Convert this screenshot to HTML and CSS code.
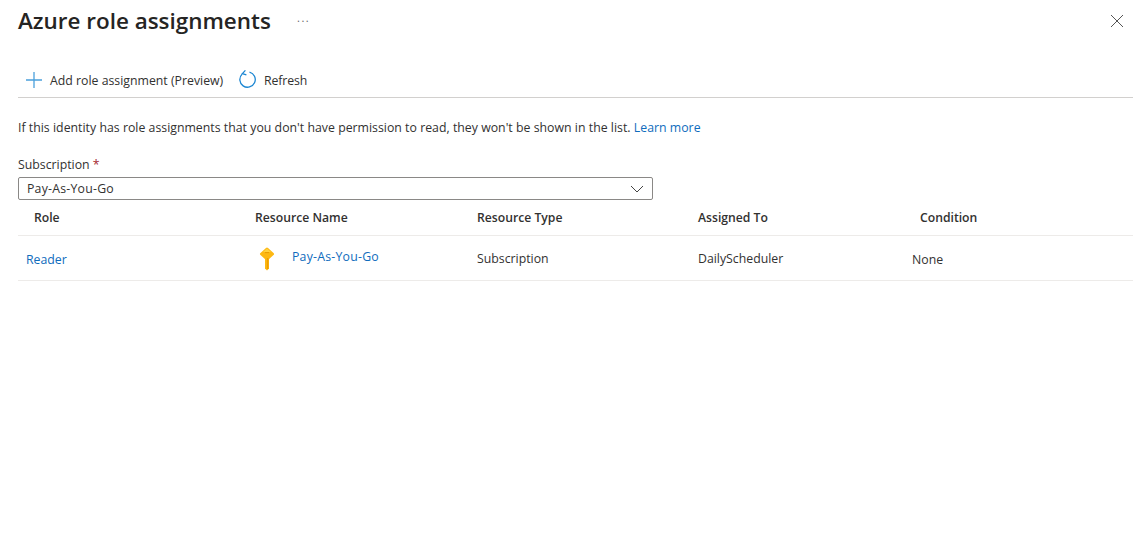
FILE: index.html
```html
<!DOCTYPE html>
<html lang="en">
<head>
    <meta charset="UTF-8">
    <title>Azure role assignments</title>
    <link rel="stylesheet" href="styles.css">
</head>
<body>
    <div class="blade">
        <div class="blade-head">
            <h1 class="blade-title">Azure role assignments</h1>
            <span class="more">...</span>
            <svg class="close" width="14" height="14" viewBox="0 0 14 14"><path d="M1 1l12 12M13 1L1 13" stroke="#555" stroke-width="1" fill="none"/></svg>
        </div>
        <div class="toolbar">
            <a class="tool tool-add">
                <svg width="16" height="16" viewBox="0 0 16 16"><path d="M8 0v16M0 8h16" stroke="#4ba0dc" stroke-width="1.3" fill="none"/></svg>
                <span>Add role assignment (Preview)</span>
            </a>
            <a class="tool tool-refresh">
                <svg width="17" height="18" viewBox="0 0 17 18"><path d="M10.5 2.1a7.7 7.7 0 1 1-7.4 2" stroke="#1b86d2" stroke-width="1.3" fill="none"/><path d="M6.4 0.4L3.4 3.6l4 1.2" stroke="#1b86d2" stroke-width="1.3" fill="none"/></svg>
                <span>Refresh</span>
            </a>
        </div>
        <p class="info">If this identity has role assignments that you don't have permission to read, they won't be shown in the list. <a class="link">Learn more</a></p>
        <label class="field-label">Subscription <span class="req">*</span></label>
        <div class="select">
            <span class="sub-name">Pay-As-You-Go</span>
            <svg width="14" height="8" viewBox="0 0 14 8"><path d="M1 1l6 6l6-6" stroke="#444" stroke-width="1" fill="none"/></svg>
        </div>
        <div class="grid-row grid-head">
            <div class="col-role">Role</div>
            <div>Resource Name</div>
            <div>Resource Type</div>
            <div>Assigned To</div>
            <div class="col-cond">Condition</div>
        </div>
        <div class="grid-row grid-body">
            <div class="cell-role"><a class="link">Reader</a></div>
            <div class="cell-name">
                <svg class="key" width="16" height="24" viewBox="0 0 16 24">
                    <path d="M8 2L13.5 7L8 12L2.5 7Z" fill="#fdb813" stroke="#fdb813" stroke-width="3" stroke-linejoin="round"/>
                    <path d="M6 10H10V21.5L8 23.5L6 21.5Z" fill="#fdb813"/>
                    <path d="M8 1.5L12 5H4Z" fill="#ffd23f"/>
                    <path d="M6 5.6H10" stroke="#e99a00" stroke-width="1"/>
                    <path d="M8.6 11V22" stroke="#ee9f00" stroke-width="1.6"/>
                </svg>
                <a class="link sub-name">Pay-As-You-Go</a>
            </div>
            <div class="cell-mid">Subscription</div>
            <div class="cell-mid">DailyScheduler</div>
            <div class="cell-low">None</div>
        </div>
    </div>
</body>
</html>
```

FILE: styles.css
```css
* {
    margin: 0;
    padding: 0;
    box-sizing: border-box;
}

body {
    background: #fff;
    color: #323130;
    font-family: "Open Sans", "Noto Sans", sans-serif;
    font-size: 12.3px;
    overflow: hidden;
}

.blade {
    padding: 0 6px 0 18px;
}

.blade-head {
    display: flex;
    align-items: center;
    height: 42px;
}

.blade-title {
    font-size: 22.45px;
    font-weight: 600;
    color: #252423;
    width: 279px;
    white-space: nowrap;
    position: relative;
    top: -1px;
}

.more {
    color: #666;
    font-size: 11px;
    letter-spacing: 1.5px;
    position: relative;
    top: -4px;
}

.close {
    margin-left: auto;
    margin-right: 9px;
}

.toolbar {
    display: flex;
    align-items: center;
    height: 56px;
    padding: 20px 0 0 8px;
    border-bottom: 1px solid #d2d0ce;
}

.tool {
    display: flex;
    align-items: center;
}

.tool span {
    padding-top: 2px;
}

.tool-add {
    gap: 8px;
    width: 214px;
}

.tool-refresh {
    gap: 7px;
    margin-left: -1px;
}

.tool-refresh svg {
    margin-bottom: 2px;
}

.tool-refresh span {
    margin-left: 1px;
    letter-spacing: -0.1px;
}

.info {
    margin-top: 21px;
    height: 18px;
    line-height: 18px;
    white-space: nowrap;
    word-spacing: 0.08px;
}

.link {
    color: #0f6cbd;
}

.field-label {
    display: block;
    margin-top: 19px;
    height: 18px;
    line-height: 18px;
}

.req {
    color: #a4262c;
}

.select {
    display: flex;
    align-items: center;
    justify-content: space-between;
    width: 635px;
    height: 23px;
    margin-top: 3px;
    padding: 0 8px;
    border: 1px solid #8a8886;
    border-radius: 2px;
}

.sub-name {
    letter-spacing: 0.22px;
}

.grid-row {
    display: grid;
    grid-template-columns: 237px 222px 221px 214px 1fr;
    align-items: center;
    border-bottom: 1px solid #edebe9;
}

.grid-head {
    height: 36px;
    font-weight: 600;
    font-size: 12.2px;
}

.grid-body {
    height: 45px;
}

.col-role {
    padding-left: 16px;
}

.col-cond {
    padding-left: 8px;
}

.cell-role {
    padding: 2px 0 0 8px;
}

.cell-name {
    display: flex;
    align-items: center;
    gap: 17px;
    padding-left: 4px;
}

.cell-name .link {
    position: relative;
    top: -2px;
}

.key {
    margin-top: 2px;
}

.cell-low {
    padding-top: 2px;
}
```
